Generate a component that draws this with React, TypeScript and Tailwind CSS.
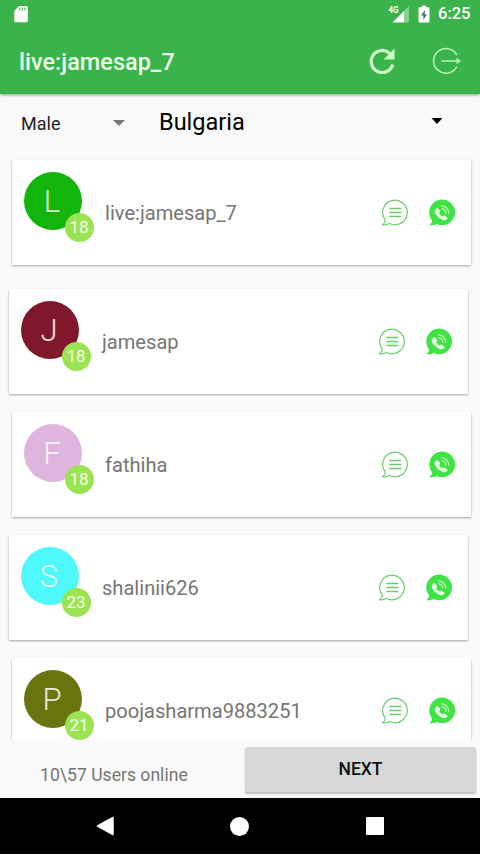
type User = {
  name: string
  age: number
  color: string
  card: string
}

const users: User[] = [
  { name: 'live:jamesap_7', age: 18, color: 'bg-[#12b50b]', card: 'ml-3 mb-6' },
  { name: 'jamesap', age: 18, color: 'bg-[#80172b]', card: 'ml-[9px] mb-[18px]' },
  { name: 'fathiha', age: 18, color: 'bg-[#dfb4de]', card: 'ml-3 mb-[18px]' },
  { name: 'shalinii626', age: 23, color: 'bg-[#4ef8fb]', card: 'ml-[9px] mb-[18px]' },
  { name: 'poojasharma9883251', age: 21, color: 'bg-[#69740f]', card: 'ml-3' },
]

function StatusBar() {
  return (
    <div className="flex h-7 items-center">
      <svg className="ml-[14px] h-[18px] w-[14px]" viewBox="0 0 14 18">
        <path fill="#fff" d="M5 1h7.500a1.300 1.300 0 0 1 1.300 1.300v13.700a1.300 1.300 0 0 1-1.300 1.300H1.500A1.300 1.300 0 0 1 .3 16V6z" />
        <path stroke="#3bb34b" strokeWidth="1.100" d="M5.700 2.500v3M8.300 2.500v3M10.900 2.500v3" />
      </svg>
      <svg className="ml-[360px] h-[18px] w-[22px]" viewBox="0 0 22 18">
        <text x="0.500" y="8.300" fill="#fff" fontSize="9.500" fontWeight="700" fontFamily="Roboto" textLength="10" lengthAdjust="spacingAndGlyphs">
          4G
        </text>
        <path fill="#fff" fillOpacity=".4" d="M21 1v16.500h-5V6z" />
        <path fill="#fff" d="M16 6v11.500H4.500z" />
      </svg>
      <svg className="ml-[8px] h-[18px] w-[12px]" viewBox="0 0 12 18">
        <path fill="#fff" d="M4 .5h4v1.700h2.500a1 1 0 0 1 1 1v13.300a1 1 0 0 1-1 1h-9a1 1 0 0 1-1-1V3.200a1 1 0 0 1 1-1H4z" />
        <path fill="#3c7f5c" d="M7 5L3 10.500h2.400V15L9 9.200H6.700z" />
      </svg>
      <span className="ml-[8px] pt-px text-[16.500px] font-medium leading-none text-white">6:25</span>
    </div>
  )
}

function AppBar() {
  return (
    <div className="flex h-[66px] items-center">
      <h1 className="ml-[19px] pt-[3px] text-[23.500px] font-medium leading-none text-[#eaffea]">live:jamesap_7</h1>
      <svg className="ml-auto h-[28px] w-[28px]" viewBox="0 0 28 28" fill="none">
        <path stroke="#cbffc6" strokeWidth="3.200" d="M24.800 17.500A11 11 0 1 1 21.500 6.200" />
        <path fill="#cbffc6" d="M26.500 1.500v11h-11z" />
      </svg>
      <svg className="ml-[36px] mr-[18px] h-[28px] w-[30px]" viewBox="0 0 30 28" fill="none" stroke="#b2f8ae" strokeWidth="1.500">
        <path d="M24.800 8.200A12.300 12.300 0 1 0 24.800 19.600M9.500 13.900H25" />
        <path fill="#b2f8ae" stroke="none" d="M24.500 10.800L29.500 13.900L24.500 17z" />
      </svg>
    </div>
  )
}

function Filters() {
  return (
    <div className="flex h-[56px] items-center text-black">
      <span className="ml-[21px] w-[92px] pt-[3px] text-[18px] leading-none text-[#222]">Male</span>
      <svg className="mt-[2px] h-[6px] w-[12px]" viewBox="0 0 12 6">
        <path fill="#777" d="M0 0h12L6 6z" />
      </svg>
      <span className="ml-[34px] pt-px text-[23.500px] leading-none">Bulgaria</span>
      <svg className="ml-auto mr-[37px] mt-[-3px] h-[6px] w-[12px]" viewBox="0 0 12 6">
        <path fill="#000" d="M0.500 0h11L6 6z" />
      </svg>
    </div>
  )
}

function ChatIcon() {
  return (
    <svg className="h-[28px] w-[28px]" viewBox="0 0 28 28" fill="none" stroke="#66cf6a" strokeWidth="1.200">
      <path d="M4.200 20.900A12.300 12.300 0 1 1 8.600 24.500Q5 26.300 1.500 25.600Q4.500 23.800 4.200 20.900z" strokeLinejoin="round" />
      <path d="M8.300 9.500h12M8.300 13.500h12M8.300 17.500h12" strokeWidth="1.400" />
    </svg>
  )
}

function CallIcon() {
  return (
    <svg className="h-[28px] w-[28px]" viewBox="0 0 28 28" fill="none">
      <path fill="#3fe344" d="M4 21.300A12.900 12.900 0 1 1 8.800 25.100Q5 26.900 1.200 26Q4.500 24.300 4 21.300z" />
      <path
        fill="#e6ffe0"
        d="M7.100 10.700q1.600-2.500 2.900-1.500l2 2.500q.5.800-.2 1.500l-.7.900q1.200 2.400 3.400 3.400l1-.8q.7-.6 1.500 0l2.200 1.700q1 .9-.6 2.200-1.700 1.400-4.300.2-5-2.200-7.200-6.600-1-2.100 0-3.500z"
      />
      <path stroke="#c9fbc4" strokeWidth="1.300" strokeLinecap="round" d="M13.700 6.800a7.400 7.400 0 0 1 7 7.400M13.900 9.800a4.300 4.300 0 0 1 3.900 4.200" />
    </svg>
  )
}

function UserCard({ user }: { user: User }) {
  return (
    <li
      className={`flex h-[105px] w-[459px] flex-none items-center bg-white shadow-[0_1px_2px_rgba(0,0,0,0.35)] ${user.card}`}
    >
      <div className="relative ml-[11.500px] mt-[11.500px] h-[70px] w-[70px] self-start">
        <div
          className={`flex h-[58px] w-[58px] items-center justify-center rounded-full pt-px pr-px text-[31px] font-light leading-none text-white/85 ${user.color}`}
        >
          {user.name[0].toUpperCase()}
        </div>
        <div className="absolute bottom-0 right-0 flex h-[29px] w-[29px] items-center justify-center rounded-full bg-[#9be353] pt-px text-[17px] leading-none text-[#f4ffe8]">
          {user.age}
        </div>
      </div>
      <span className="ml-[11.500px] pt-px text-[20.100px] leading-none text-[#757575]">{user.name}</span>
      <div className="ml-auto mr-[15px] flex gap-[19px]">
        <ChatIcon />
        <CallIcon />
      </div>
    </li>
  )
}

function BottomBar() {
  return (
    <div className="flex h-[58px] bg-[#fafafa]">
      <span className="ml-[40px] mt-[27px] text-[17.600px] leading-none text-[#757575]">10\57 Users online</span>
      <button className="ml-auto mr-[4px] mt-[7px] h-[45px] w-[231px] rounded-[2px] bg-[#d6d7d7] text-[17.500px] font-medium leading-none text-[#111] shadow-[0_2px_2px_rgba(0,0,0,0.25)]">
        NEXT
      </button>
    </div>
  )
}

function NavBar() {
  return (
    <div className="flex h-[56px] items-center bg-black">
      <svg className="ml-[96px] h-[20px] w-[18px]" viewBox="0 0 18 20">
        <path fill="#fff" stroke="#fff" strokeWidth="1.500" strokeLinejoin="round" d="M1.500 10L17 1.500v17z" />
      </svg>
      <div className="ml-[116px] h-[19px] w-[19px] rounded-full bg-white" />
      <div className="ml-[117px] h-[18px] w-[18px] rounded-[1px] bg-white" />
    </div>
  )
}

export default function App() {
  return (
    <div className="flex h-[854px] w-[480px] flex-col overflow-hidden bg-[#fafafa] font-[Roboto,sans-serif]">
      <header className="z-10 h-[94px] flex-none bg-[#3bb34b] shadow-[0_1px_3px_rgba(0,0,0,0.4)]">
        <StatusBar />
        <AppBar />
      </header>
      <Filters />
      <ul className="flex h-[590px] flex-none flex-col overflow-hidden pt-[10px]">
        {users.map((user) => (
          <UserCard key={user.name} user={user} />
        ))}
      </ul>
      <BottomBar />
      <NavBar />
    </div>
  )
}
